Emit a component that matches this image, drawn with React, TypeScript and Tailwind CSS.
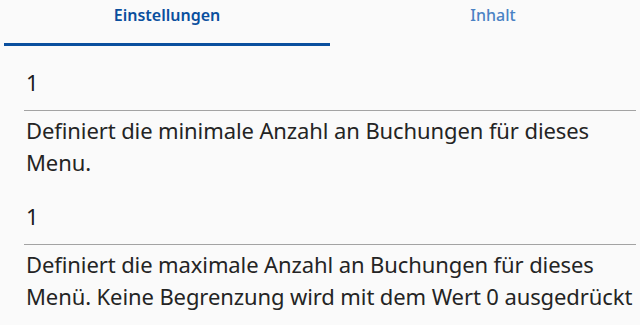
import React from "react";

const fields = [
  { value: "1", hint: "Definiert die minimale Anzahl an Buchungen für dieses Menu." },
  {
    value: "1",
    hint: "Definiert die maximale Anzahl an Buchungen für dieses Menü. Keine Begrenzung wird mit dem Wert 0 ausgedrückt",
  },
];

const App = () => {
  return (
    <div className="w-[640px] h-[325px] overflow-hidden bg-[#fafafa] font-['Noto_Sans',sans-serif]">
      <div className="flex h-[46px]">
        <div className="ml-[4px] w-[326px] flex flex-col">
          <div className="flex-1 flex items-start justify-center pt-[3px] text-[16px] font-semibold text-[#0a4f9e]">
            Einstellungen
          </div>
          <div className="h-[3px] bg-[#0a4f9e]" />
        </div>
        <div className="flex-1 flex items-start justify-center pt-[3px] pl-4 text-[16px] font-medium text-[#4a82c4]">
          Inhalt
        </div>
      </div>
      <div className="pl-[24px] pr-[4px]">
        {fields.map((f, i) => (
          <div key={i} className={i === 0 ? "pt-[21px]" : "pt-[23px]"}>
            <div className="h-[44px] border-b border-[#a3a3a3] pl-[2px] text-[22px] leading-[30px] text-[#1c1c1c]">
              {f.value}
            </div>
            <p className="pl-[2px] pt-[3px] text-[22px] leading-[32px] tracking-[-0.1px] text-[#242424]">
              {f.hint}
            </p>
          </div>
        ))}
      </div>
    </div>
  );
};

export default App;
